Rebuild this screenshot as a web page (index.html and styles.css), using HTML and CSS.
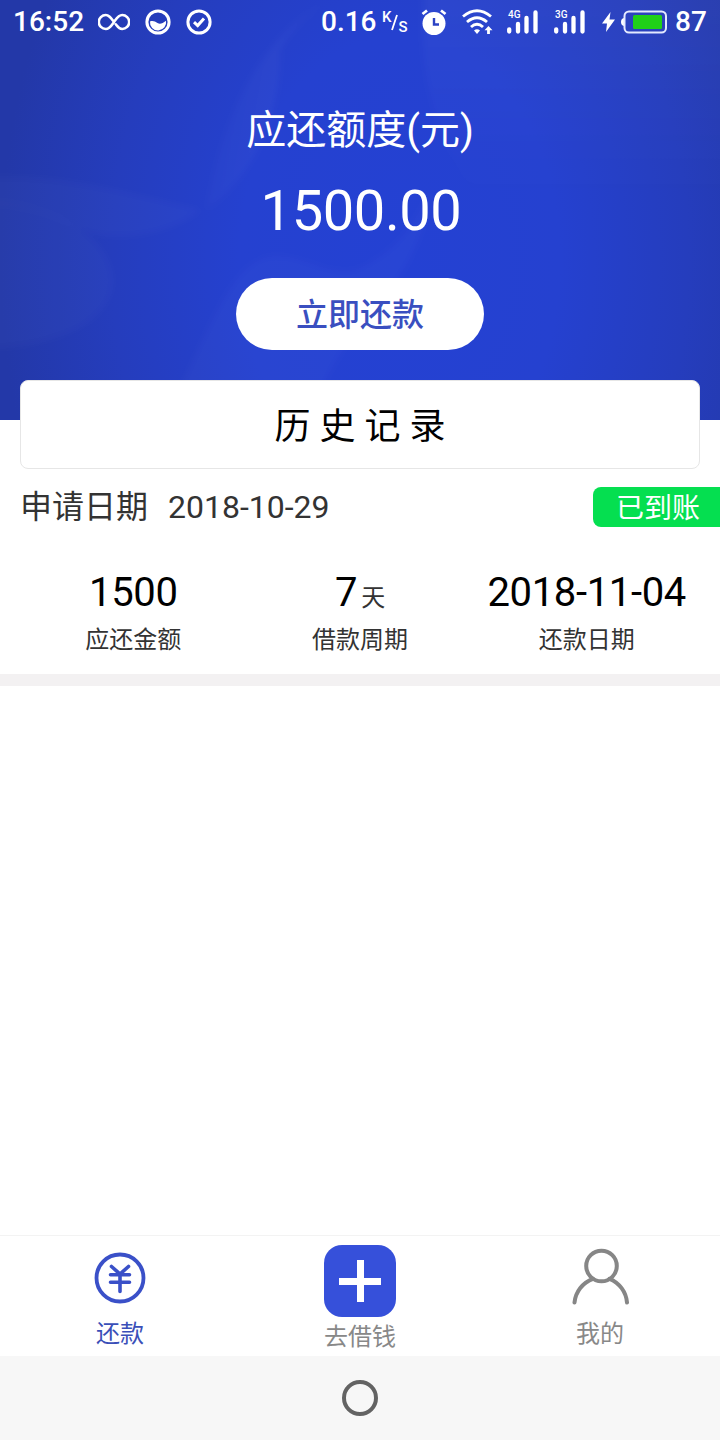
FILE: index.html
```html
<!DOCTYPE html>
<html lang="zh-CN">
<head>
    <meta charset="UTF-8">
    <meta name="viewport" content="width=device-width, initial-scale=1.0">
    <title>还款</title>
    <link rel="stylesheet" href="styles.css">
</head>
<body>
    <div class="app">
        <header class="header">
            <svg class="header-bg" viewBox="0 0 720 420" preserveAspectRatio="none">
                <defs>
                    <linearGradient id="petal" x1="0" y1="0" x2="1" y2="0.3">
                        <stop offset="0" stop-color="#fff" stop-opacity="0"/>
                        <stop offset="1" stop-color="#fff" stop-opacity="0.05"/>
                    </linearGradient>
                    <linearGradient id="fade" x1="0" y1="0" x2="0" y2="1">
                        <stop offset="0" stop-color="#fff" stop-opacity="0.035"/>
                        <stop offset="1" stop-color="#fff" stop-opacity="0"/>
                    </linearGradient>
                    <filter id="soft"><feGaussianBlur stdDeviation="3"/></filter>
                </defs>
                <g filter="url(#soft)">
                    <path d="M330 0C255 40 222 120 206 210C250 180 280 120 280 50Q295 20 330 0Z" fill="url(#petal)"/>
                    <path d="M424 -10C416 80 440 150 480 200H730V-10Z" fill="url(#fade)"/>
                    <path d="M-10 178C60 175 110 190 200 210C170 235 110 245 70 225Q30 205 -10 205Z" fill="#fff" fill-opacity="0.02"/>
                    <path d="M-10 200C60 205 110 240 112 280C112 320 60 345 -10 348Z" fill="#fff" fill-opacity="0.02"/>
                    <path d="M180 390C220 300 240 258 275 256C305 256 325 275 355 270C405 250 420 210 430 190C420 300 330 320 310 430H160Z" fill="#fff" fill-opacity="0.02"/>
                </g>
            </svg>

            <div class="status">
                <span class="status-text time">16:52</span>
                <svg class="icon-infinity" width="32" height="18" viewBox="0 0 32 18">
                    <path d="M16 9C12.500 4.500 11 2 7.800 2A6.600 6.600 0 0 0 7.800 16C11.500 16 13.300 12.800 16 9S20.500 2 24.200 2A6.600 6.600 0 0 1 24.200 16C21 16 19.500 13.500 17.800 11.300" fill="none" stroke="#fff" stroke-width="2.600" stroke-linecap="round"/>
                </svg>
                <svg class="icon-wave" width="26" height="26" viewBox="0 0 26 26">
                    <circle cx="13" cy="13" r="11.100" fill="none" stroke="#fff" stroke-width="3"/>
                    <path d="M5 12.500C8 11.300 10 12.500 12.500 14S17.500 14.500 21 11.800A8.100 8.100 0 1 1 5 12.500Z" fill="#fff"/>
                </svg>
                <svg class="icon-check" width="26" height="26" viewBox="0 0 26 26">
                    <circle cx="13" cy="13" r="11.100" fill="none" stroke="#fff" stroke-width="3"/>
                    <path d="M8 13.200L11.700 16.600L18 9.600" fill="none" stroke="#fff" stroke-width="3"/>
                </svg>

                <span class="status-text speed">0.16</span>
                <span class="unit"><span class="unit-top">K</span><svg width="7" height="17" viewBox="0 0 7 17"><path d="M6 1L1 16" stroke="#fff" stroke-width="1.800"/></svg><span class="unit-bottom">S</span></span>
                <svg class="icon-alarm" width="26" height="27" viewBox="0 0 26 27">
                    <circle cx="13" cy="14.500" r="11.500" fill="#fff"/>
                    <path d="M1.500 5L6 1.500M20 1.500L24.500 5" stroke="#fff" stroke-width="2.800"/>
                    <path d="M13 9V15.500H18" fill="none" stroke="#2b43c4" stroke-width="2.400"/>
                </svg>
                <svg class="icon-wifi" width="31" height="28" viewBox="0 0 31 28">
                    <g fill="none" stroke="#fff" stroke-width="2.900">
                        <path d="M1 8.500Q15 -3 29 8.500"/>
                        <path d="M5 14Q15 5.500 25 14"/>
                        <path d="M9 19Q15 13.500 21 19"/>
                    </g>
                    <path d="M12 22.500Q15 20 18 22.500L15 26Z" fill="#fff"/>
                    <path d="M26.500 18L30.500 22.300H27.900V26H25.100V22.300H22.500Z" fill="#fff"/>
                </svg>
                <span class="signal signal-4g">
                    <small>4G</small>
                    <svg width="31" height="24" viewBox="0 0 31 24"><path d="M2.200 19.300V21.500M11 14V21.500M19.500 8V21.500M28.500 2.500V21.500" stroke="#fff" stroke-width="4.300" stroke-linecap="round"/></svg>
                </span>
                <span class="signal signal-3g">
                    <small>3G</small>
                    <svg width="31" height="24" viewBox="0 0 31 24"><path d="M2.200 19.300V21.500M11 14V21.500M19.500 8V21.500M28.500 2.500V21.500" stroke="#fff" stroke-width="4.300" stroke-linecap="round"/></svg>
                </span>
                <svg class="icon-bolt" width="13" height="20" viewBox="0 0 13 20">
                    <path d="M8.500 0L0 11.500H5L4 20L13 7.500H7.500Z" fill="#fff"/>
                </svg>
                <svg class="icon-battery" width="46" height="24" viewBox="0 0 46 24">
                    <path d="M3 8Q0 8.500 0 12T3 16Z" fill="#fff"/>
                    <rect x="3.500" y="1.500" width="41.500" height="21" rx="4.500" fill="none" stroke="#e4eaff" stroke-width="2"/>
                    <rect x="12" y="5" width="29" height="14" rx="1.500" fill="#20d018"/>
                </svg>
                <span class="status-text battery">87</span>
            </div>

            <div class="amount-label">应还额度(元)</div>
            <div class="amount">1500.00</div>
            <button class="repay-btn">立即还款</button>
        </header>

        <main class="content">
            <div class="history-title">历 史 记 录</div>
            <section class="record">
                <div class="record-head">
                    <span>申请日期</span>
                    <span class="apply-date">2018-10-29</span>
                    <span class="tag">已到账</span>
                </div>
                <div class="record-body">
                    <div class="col">
                        <p class="value">1500</p>
                        <p class="label">应还金额</p>
                    </div>
                    <div class="col">
                        <p class="value">7<small>天</small></p>
                        <p class="label">借款周期</p>
                    </div>
                    <div class="col">
                        <p class="value">2018-11-04</p>
                        <p class="label">还款日期</p>
                    </div>
                </div>
            </section>
        </main>

        <nav class="tabbar">
            <a class="tab active">
                <svg width="52" height="52" viewBox="0 0 52 52" fill="none" stroke="#3a50c8">
                    <circle cx="26" cy="26" r="23.500" stroke-width="3.800"/>
                    <path d="M17.500 14.500L26 22L34.500 14.500M16.500 22.800H35.500M16.500 30.300H35.500M26 22V39.500" stroke-width="3.600" stroke-linecap="round"/>
                </svg>
                <span>还款</span>
            </a>
            <a class="tab tab-borrow">
                <svg width="72" height="72" viewBox="0 0 72 72">
                    <rect width="72" height="72" rx="18" fill="#3650da"/>
                    <path d="M15 36.500H57M36.500 15V57" stroke="#fff" stroke-width="7"/>
                </svg>
                <span>去借钱</span>
            </a>
            <a class="tab tab-mine">
                <svg width="58" height="58" viewBox="0 0 58 58" fill="none" stroke="#868686" stroke-width="4">
                    <circle cx="30.500" cy="18" r="15.300"/>
                    <path d="M3.500 54.500A28 28 0 0 1 22 30.800M38.500 30.800A28 28 0 0 1 56 54.500" stroke-linecap="round"/>
                </svg>
                <span>我的</span>
            </a>
        </nav>
        <div class="system-nav"><span class="home-btn"></span></div>
    </div>
</body>
</html>
```
FILE: styles.css
```css
* {
    box-sizing: border-box;
}

body {
    margin: 0;
    font-family: Roboto, "Noto Sans CJK SC", sans-serif;
    background-color: #fff;
    color: #333;
}

p {
    margin: 0;
}

svg {
    display: block;
    flex-shrink: 0;
}

.app {
    display: flex;
    flex-direction: column;
    width: 720px;
    height: 1440px;
    overflow: hidden;
}

/* header */
.header {
    position: relative;
    display: flex;
    flex-direction: column;
    align-items: center;
    flex-shrink: 0;
    height: 420px;
    color: #fff;
    background: radial-gradient(ellipse 400px 560px at 400px 260px, #2441d3 0%, #2541d0 40%, #253dbd 72%, #2338a8 100%);
}

.header-bg {
    position: absolute;
    top: 0;
    left: 0;
    width: 100%;
    height: 100%;
}

.header > div,
.repay-btn {
    z-index: 1;
}

.status {
    display: flex;
    align-items: center;
    width: 100%;
    height: 44px;
    padding-left: 13px;
}

.status-text {
    font-size: 28px;
    font-weight: 500;
    line-height: 46px;
}

.time {
    width: 85px;
}

.icon-wave {
    margin-left: 15px;
}

.icon-check {
    margin-left: 15px;
}

.speed {
    width: 61px;
    margin-left: 109px;
}

.unit {
    display: flex;
    align-items: center;
    width: 26px;
    height: 24px;
    font-size: 15px;
    font-weight: 500;
    line-height: 15px;
}

.unit-top {
    align-self: flex-start;
}

.unit-bottom {
    align-self: flex-end;
    margin-bottom: -1px;
}

.icon-alarm {
    margin-left: 13px;
}

.icon-wifi {
    margin-left: 15px;
}

.signal {
    display: flex;
    position: relative;
    margin-left: 14px;
}

.signal small {
    position: absolute;
    top: 0;
    left: 1px;
    font-size: 10px;
    font-weight: 500;
    line-height: 10px;
}

.signal-3g {
    margin-left: 16px;
}

.icon-bolt {
    margin-left: 17px;
}

.icon-battery {
    margin-left: 6px;
}

.battery {
    margin-left: 8px;
}

.amount-label {
    margin-top: 59px;
    font-size: 40px;
    line-height: 56px;
}

.amount {
    margin-top: 16px;
    padding-left: 2px;
    font-size: 56px;
    letter-spacing: -0.4px;
    line-height: 72px;
}

.repay-btn {
    width: 248px;
    height: 72px;
    margin-top: 31px;
    padding: 2px 0 0;
    border: none;
    border-radius: 36px;
    background-color: #fff;
    color: #3a4fc0;
    font-family: inherit;
    font-size: 32px;
    font-weight: 500;
    line-height: 70px;
}

/* history */
.content {
    flex: 1;
    margin-top: -40px;
    z-index: 1;
}

.history-title {
    height: 89px;
    margin: 0 20px;
    border: 1px solid #e6e6e6;
    border-radius: 8px;
    background-color: #fff;
    color: #000;
    font-size: 36px;
    line-height: 92px;
    text-align: center;
}

.record {
    height: 217px;
    border-bottom: 12px solid #f3f1f2;
}

.record-head {
    display: flex;
    height: 76px;
    padding: 18px 0 0 20px;
    font-size: 32px;
    line-height: 40px;
}

.apply-date {
    margin-left: 20px;
}

.tag {
    width: 127px;
    height: 40px;
    margin-left: auto;
    padding-left: 23px;
    border-radius: 8px 0 0 8px;
    background-color: #05df50;
    color: #fff;
    font-size: 28px;
    line-height: 44px;
}

.record-body {
    display: flex;
    padding: 24px 20px 0;
}

.col {
    flex: 1;
    text-align: center;
}

.value {
    height: 48px;
    color: #000;
    font-size: 40px;
    letter-spacing: -0.35px;
    line-height: 48px;
    white-space: nowrap;
}

.value small {
    margin-left: 4px;
    color: #333;
    font-size: 24px;
    line-height: 24px;
}

.label {
    font-size: 24px;
    line-height: 46px;
}

/* bottom bar */
.tabbar {
    display: flex;
    height: 121px;
    border-top: 1px solid #f3f3f3;
}

.tab {
    display: flex;
    flex: 1;
    flex-direction: column;
    align-items: center;
    padding-top: 16px;
    color: #888;
    font-size: 24px;
    line-height: 36px;
}

.tab span {
    margin-top: 12px;
}

.active {
    color: #3a4fb8;
}

.tab-borrow {
    padding-top: 9px;
}

.tab-borrow span {
    margin-top: 2px;
}

.tab-mine {
    padding-top: 12px;
}

.tab-mine span {
    margin-top: 10px;
}

.system-nav {
    display: flex;
    align-items: center;
    justify-content: center;
    height: 84px;
    background-color: #f7f7f7;
}

.home-btn {
    width: 36px;
    height: 36px;
    border: 4px solid #636363;
    border-radius: 50%;
}
```
